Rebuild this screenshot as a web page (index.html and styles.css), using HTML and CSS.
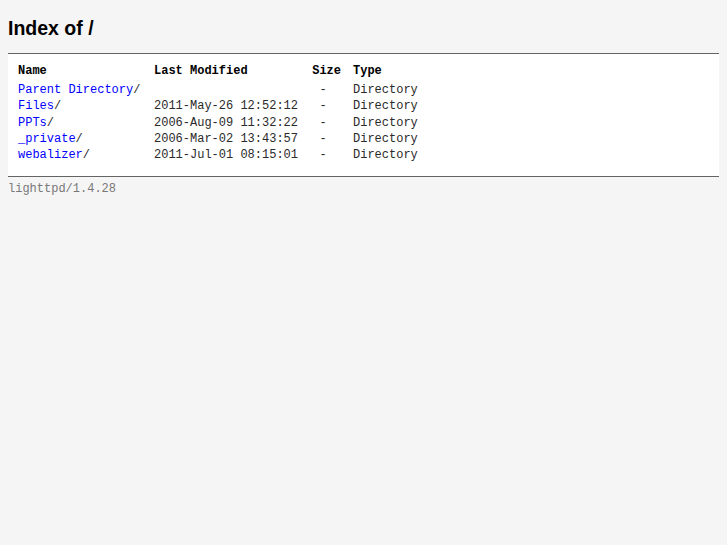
FILE: index.html
```html
<!DOCTYPE html>
<html>
<head>
<meta charset="utf-8">
<title>Index of /</title>
<link rel="stylesheet" href="styles.css">
</head>
<body>
<h2 class="title">Index of /</h2>
<div class="list">
<table class="listing">
<colgroup><col class="c-name"><col class="c-mod"><col class="c-size"><col class="c-type"></colgroup>
<thead>
<tr><th class="n">Name</th><th class="m">Last Modified</th><th class="s">Size</th><th class="t">Type</th></tr>
</thead>
<tbody>
<tr><td class="n"><a href="../">Parent Directory</a>/</td><td class="m">&nbsp;</td><td class="s">- &nbsp;</td><td class="t">Directory</td></tr>
<tr><td class="n"><a href="Files/">Files</a>/</td><td class="m">2011-May-26 12:52:12</td><td class="s">- &nbsp;</td><td class="t">Directory</td></tr>
<tr><td class="n"><a href="PPTs/">PPTs</a>/</td><td class="m">2006-Aug-09 11:32:22</td><td class="s">- &nbsp;</td><td class="t">Directory</td></tr>
<tr><td class="n"><a href="_private/">_private</a>/</td><td class="m">2006-Mar-02 13:43:57</td><td class="s">- &nbsp;</td><td class="t">Directory</td></tr>
<tr><td class="n"><a href="webalizer/">webalizer</a>/</td><td class="m">2011-Jul-01 08:15:01</td><td class="s">- &nbsp;</td><td class="t">Directory</td></tr>
</tbody>
</table>
</div>
<div class="foot">lighttpd/1.4.28</div>
</body>
</html>
```
FILE: styles.css
```css
html, body {
  margin: 0;
  padding: 0;
}
body {
  background-color: #f5f5f5;
  padding: 0 8px;
  color: #000;
}
.title {
  font-family: "Liberation Sans", Arial, sans-serif;
  font-weight: bold;
  font-size: 19.5px;
  line-height: 22px;
  margin: 17px 0 14px 0;
}
.list {
  background-color: #fff;
  border-top: 1px solid #646464;
  border-bottom: 1px solid #646464;
  padding: 9px 0 13px 10px;
}
.listing {
  border-collapse: collapse;
  border-spacing: 0;
  table-layout: fixed;
  font-family: "Liberation Mono", "Courier New", monospace;
  font-size: 12px;
}
.c-name { width: 136px; }
.c-mod { width: 158px; }
.c-size { width: 29px; }
.c-type { width: 100px; }
.listing th, .listing td {
  padding: 0;
  text-align: left;
  white-space: pre;
  line-height: 16.25px;
}
.listing th {
  font-weight: bold;
  line-height: 16px;
  padding-bottom: 3px;
}
.listing td {
  color: #2a2a2a;
}
.listing .s {
  text-align: right;
}
.listing .t {
  padding-left: 12px;
}
.listing a {
  color: #0000ff;
  text-decoration: none;
}
.foot {
  font-family: "Liberation Mono", "Courier New", monospace;
  font-size: 12px;
  line-height: 16px;
  color: #787878;
  padding-top: 4px;
}
```
